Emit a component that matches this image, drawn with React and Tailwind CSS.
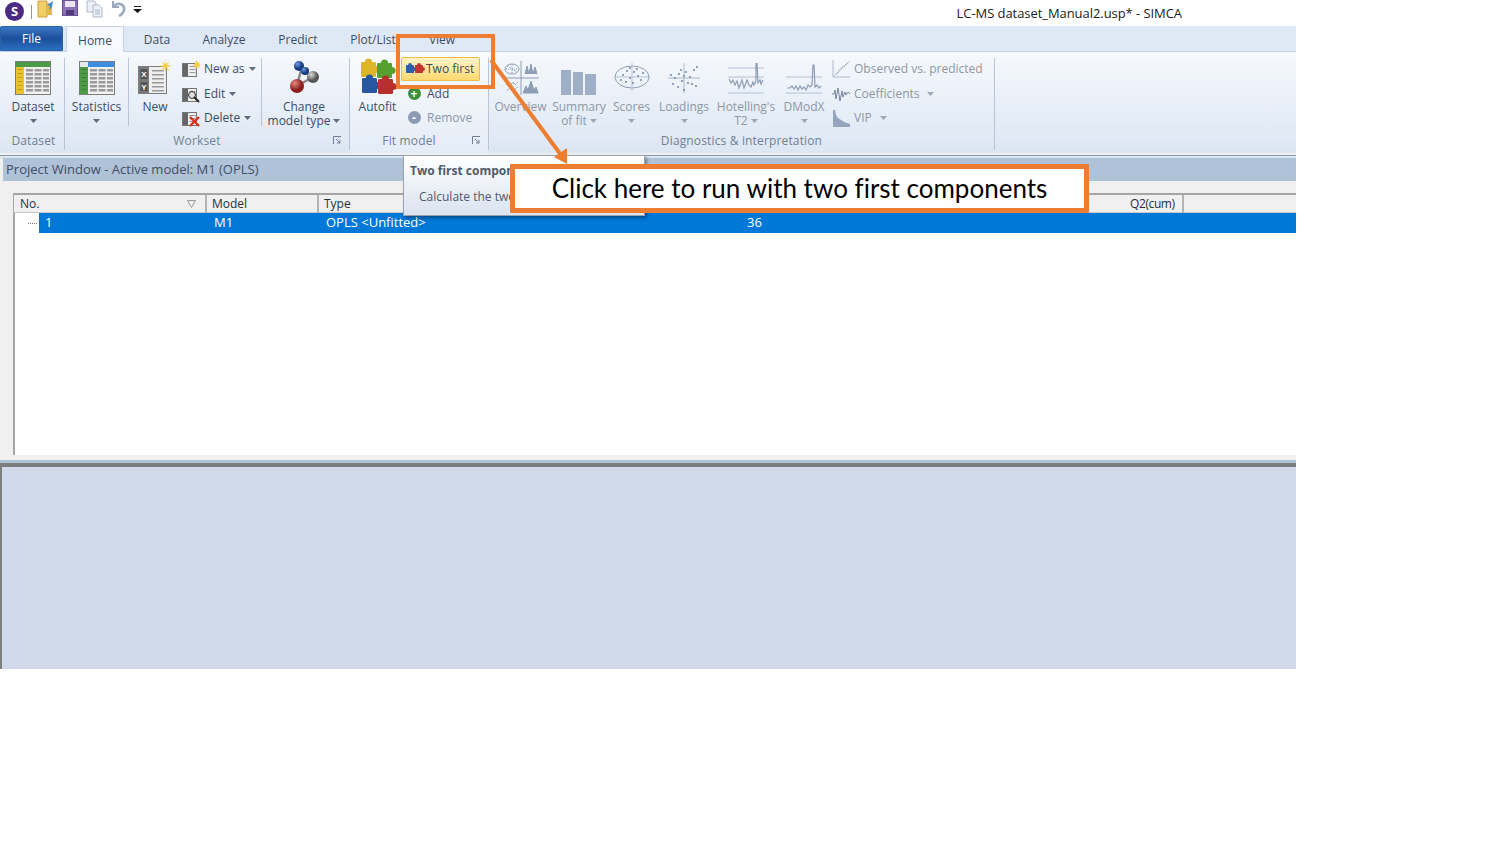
import React from "react";

const Caret = ({ className = "" }) => (
  <svg width="7" height="4" viewBox="0 0 7 4" className={className}>
    <path d="M0 0h7L3.5 4z" fill="currentColor" />
  </svg>
);

// table icon used by Dataset and Statistics
function TableIcon({ side, top, corner }) {
  const rows = [8, 12, 16, 20, 24, 28];
  return (
    <svg width="36" height="34" viewBox="0 0 36 34">
      <rect x="0.5" y="0.5" width="35" height="33" fill="#f2f2f2" stroke="#7d7d7d" />
      <rect x="1" y="1" width="34" height="5" fill={top} />
      <rect x="1" y="1" width="8" height="32" fill={side} />
      {corner && <rect x="1" y="1" width="8" height="5" fill={corner} />}
      {rows.map((y) => (
        <g key={y}>
          <rect x="11" y={y} width="7" height="2.5" fill="#9a9a9a" />
          <rect x="19.5" y={y} width="7" height="2.5" fill="#9a9a9a" />
          <rect x="28" y={y} width="6" height="2.5" fill="#9a9a9a" />
          <rect x="2.5" y={y} width="5" height="1" fill="#00000033" />
        </g>
      ))}
    </svg>
  );
}

function NewIcon() {
  return (
    <svg width="34" height="36" viewBox="0 0 34 36">
      <rect x="0.5" y="7.5" width="28" height="27" fill="#eee" stroke="#7d7d7d" />
      <rect x="1" y="8" width="10" height="26" fill="#7a7a7a" />
      <rect x="2.5" y="10" width="7" height="10" fill="#555" />
      <rect x="2.5" y="23" width="7" height="9" fill="#555" />
      <text x="6" y="18" fontSize="8" fontWeight="700" fill="#fff" textAnchor="middle" fontFamily="Liberation Sans">X</text>
      <text x="6" y="31" fontSize="8" fontWeight="700" fill="#fff" textAnchor="middle" fontFamily="Liberation Sans">Y</text>
      {[11, 15, 19, 23, 27, 31].map((y) => (
        <rect key={y} x="14" y={y} width="12" height="1.5" fill="#9a9a9a" />
      ))}
      <path d="M27 0v5l-4-3 3 4-5 1 5 1-3 4 4-3v5l1-5 4 3-3-4 5-1-5-1 3-4-4 3z" fill="#f6cf3e" />
    </svg>
  );
}

function SmallXY({ children }) {
  return (
    <svg width="18" height="18" viewBox="0 0 18 18">
      <rect x="0.5" y="3.5" width="14" height="13" fill="#eee" stroke="#777" />
      <rect x="1" y="4" width="5" height="12" fill="#666" />
      {[6, 9, 12].map((y) => (
        <rect key={y} x="7.5" y={y} width="6" height="1" fill="#999" />
      ))}
      {children}
    </svg>
  );
}

function Molecule() {
  return (
    <svg width="34" height="34" viewBox="0 0 34 34">
      <defs>
        <radialGradient id="mb" cx="35%" cy="30%"><stop offset="0" stopColor="#6f9be0" /><stop offset="1" stopColor="#12377f" /></radialGradient>
        <radialGradient id="mg" cx="35%" cy="30%"><stop offset="0" stopColor="#ddd" /><stop offset="1" stopColor="#555" /></radialGradient>
        <radialGradient id="mr" cx="35%" cy="30%"><stop offset="0" stopColor="#e58a80" /><stop offset="1" stopColor="#8d1c1c" /></radialGradient>
      </defs>
      <path d="M13 8L26 16M10 25L14 9M10 25L26 16" stroke="#8a8a8a" strokeWidth="2.5" />
      <circle cx="12" cy="5" r="5" fill="url(#mb)" />
      <circle cx="18" cy="10" r="4" fill="url(#mb)" />
      <circle cx="26" cy="16" r="6" fill="url(#mg)" />
      <circle cx="10" cy="25" r="7" fill="url(#mr)" />
    </svg>
  );
}

const PuzzlePiece = ({ x, y, s, fill }) => (
  <g fill={fill}>
    <rect x={x} y={y} width={s} height={s} rx={s * 0.08} />
    <circle cx={x + s / 2} cy={y} r={s * 0.24} />
    <circle cx={x + s} cy={y + s / 2} r={s * 0.24} />
  </g>
);

function Autofit() {
  return (
    <svg width="38" height="38" viewBox="0 0 38 38">
      <PuzzlePiece x={2} y={5} s={15} fill="#dcb52a" />
      <PuzzlePiece x={18} y={6} s={15} fill="#55a02e" />
      <PuzzlePiece x={3} y={21} s={15} fill="#27579f" />
      <PuzzlePiece x={19} y={22} s={15} fill="#b8302c" />
    </svg>
  );
}

function TwoFirstIcon() {
  return (
    <svg width="20" height="14" viewBox="0 0 20 14">
      <PuzzlePiece x={1} y={3} s={8} fill="#2f5da8" />
      <PuzzlePiece x={10} y={3} s={8} fill="#c2352f" />
    </svg>
  );
}

const RoundIcon = ({ bg, sign }) => (
  <span className={`w-[13px] h-[13px] rounded-full flex items-center justify-center text-white text-[12px] leading-none font-bold ${bg}`}>
    {sign}
  </span>
);

const DIM = "#8d9db5";

function Overview() {
  return (
    <svg width="36" height="34" viewBox="0 0 36 34" fill="none" stroke={DIM} strokeWidth="1">
      <path d="M18 0v34M0 17h36" />
      <ellipse cx="9" cy="8" rx="7" ry="5" />
      <path d="M4 5l10 6M9 3v10M3 8h12" strokeDasharray="1 1" />
      <path d="M22 13l2-8 2 8 2-10 2 10 2-7 2 7" fill={DIM} />
      <path d="M3 24l2-2 2 3 3-4 2 3 3-3M4 29l4-2 3 2 4-3" strokeDasharray="2 1" />
      <path d="M20 32l3-7 2 4 3-9 3 9 2-3 2 6z" fill={DIM} />
    </svg>
  );
}

function Summary() {
  return (
    <svg width="36" height="26" viewBox="0 0 36 26" fill="#9fafc6">
      <rect x="0" y="1" width="10" height="25" />
      <rect x="12" y="3" width="10" height="23" />
      <rect x="24" y="5" width="11" height="21" />
    </svg>
  );
}

function Scores() {
  const dots = [[9, 16], [13, 12], [16, 19], [20, 13], [24, 17], [27, 21], [12, 23], [19, 24], [23, 10], [29, 14], [7, 21], [16, 9]];
  return (
    <svg width="36" height="36" viewBox="0 0 36 36" fill="none">
      <ellipse cx="18" cy="18" rx="17" ry="11" stroke={DIM} />
      <path d="M18 4v28M0 18h36" stroke="#b7c3d6" />
      {dots.map(([x, y]) => <circle key={`${x}-${y}`} cx={x} cy={y} r="1" fill="#76879f" />)}
    </svg>
  );
}

function Loadings() {
  const dots = [[8, 17], [12, 13], [15, 20], [19, 11], [23, 16], [27, 9], [30, 6], [6, 23], [11, 26], [17, 29], [25, 23], [29, 25], [14, 9], [21, 22], [4, 14], [17, 15]];
  return (
    <svg width="34" height="34" viewBox="0 0 34 34" fill="none">
      <path d="M17 2v30M1 17h32" stroke="#a9b7cb" />
      {dots.map(([x, y]) => <circle key={`${x}-${y}`} cx={x} cy={y} r="1.1" fill="#7c8da5" />)}
    </svg>
  );
}

function HotellingIcon() {
  return (
    <svg width="36" height="32" viewBox="0 0 36 32" fill="none" stroke={DIM}>
      <path d="M0 5h36M0 14h36M0 30h36" stroke="#b4c1d4" />
      <path d="M1 16l2 4 2-3 2 5 2-4 2 7 3-8 2 8 3-8 2 5 2 2 2-5 1 3 2-4 0-18 1 0 1 20 2-3 1 4 2-4" strokeWidth="1.2" />
    </svg>
  );
}

function DModXIcon() {
  return (
    <svg width="36" height="32" viewBox="0 0 36 32" fill="none" stroke={DIM}>
      <path d="M0 14h36M0 30h36" stroke="#b4c1d4" />
      <path d="M1 25h3l2-2 2 3 2-3 2 4 2-4 2 3 2-2 2 3 2-5 2 2 2-2 1-20 1 0 1 22 2-2 2 3 2-2" strokeWidth="1.2" />
    </svg>
  );
}

function Observed() {
  return (
    <svg width="18" height="18" viewBox="0 0 18 18" fill="none">
      <path d="M1 0v17h17" stroke="#a9b7cb" />
      <path d="M2 16L18 1" stroke="#b8c4d6" />
      <path d="M4 14l2-1 1-3 2-1 1-2 3-1 1-2 2-1" stroke="#8496ae" strokeDasharray="1 1" />
    </svg>
  );
}

function Coefficients() {
  return (
    <svg width="18" height="18" viewBox="0 0 18 18" fill="none" stroke="#74859d">
      <path d="M0 9h2l1-4 1 9 2-11 2 13 2-10 1 6 2-5 1 3 2-3 2 2" />
    </svg>
  );
}

function Vip() {
  return (
    <svg width="18" height="18" viewBox="0 0 18 18" fill="#93a4bc">
      <path d="M1 1h2l1 5 2 3 3 2 3 2 3 1 3 1v3H1z" />
    </svg>
  );
}

function BigButton({ w, icon, label, label2, caret, caretInline, dim }) {
  return (
    <div className={`flex flex-col items-center ${w} ${dim ? "text-[#8d97a6]" : "text-[#3c4c63]"}`}>
      <div className="h-[48px] pb-[5px] flex items-end justify-center">{icon}</div>
      <div className="leading-[14px] whitespace-nowrap">{label}</div>
      {label2 && (
        <div className="leading-[14px] whitespace-nowrap flex items-center gap-[3px]">
          {label2}
          {caretInline && <Caret className="opacity-80" />}
        </div>
      )}
      {caret && <Caret className="mt-[5px] opacity-80" />}
    </div>
  );
}

function SmallButton({ icon, label, caret, dim, caretGap = "" }) {
  return (
    <div className={`h-[24.4px] flex items-center whitespace-nowrap gap-[4px] ${dim ? "text-[#8d97a6]" : "text-[#3c4c63]"}`}>
      <span className="w-[18px] flex justify-center">{icon}</span>
      <span>{label}</span>
      {caret && <Caret className={`${caretGap} opacity-80`} />}
    </div>
  );
}

const Launcher = ({ className }) => (
  <svg width="8" height="8" viewBox="0 0 8 8" className={className} fill="none" stroke="#6e7f96">
    <path d="M0.5 8V0.5H8M3 3l4 4M7 4v3H4" />
  </svg>
);

const GroupSep = () => <div className="w-[1px] h-[92px] mt-[6px] bg-[#b8c5d6] shrink-0" />;
const InnerSep = () => <div className="w-[1px] h-[68px] mt-[6px] bg-[#b8c5d6] shrink-0" />;

function GroupLabel({ children, launcher, pad }) {
  return (
    <div className={`relative h-[15px] leading-[15px] text-center text-[#6f7f95] tracking-[0.15px] ${pad ? "pr-[20px]" : ""}`}>
      {children}
      {launcher && <Launcher className="absolute right-[8px] top-[3px]" />}
    </div>
  );
}

function Tabs() {
  const tabs = [["Data", "w-[66px]"], ["Analyze", "w-[68px]"], ["Predict", "w-[80px]"], ["Plot/List", "w-[70px]"], ["View", "w-[68px]"]];
  return (
    <div className="h-[26px] bg-[#dfe9f5] flex items-end border-b border-[#c5d2e3] text-[12px] text-[#3c4c63]">
      <div className="w-[63px] h-[25px] pt-[1px] rounded-t-[2px] border border-[#2a62a8] bg-gradient-to-b from-[#3c78c4] via-[#1b4f9a] to-[#2a6fc0] text-white font-medium flex items-center justify-center">File</div>
      <div className="w-[58px] h-[26px] ml-[3px] -mb-[1px] pt-[2px] bg-[#f6f9fd] border border-b-0 border-[#c5d2e3] rounded-t-[2px] flex items-center justify-center">Home</div>
      {tabs.map(([name, w]) => (
        <div key={name} className={`${w} h-[25px] pt-[3px] flex items-center justify-center`}>{name}</div>
      ))}
    </div>
  );
}

function Ribbon() {
  return (
    <div className="h-[101px] bg-gradient-to-b from-[#f6f9fd] to-[#dce6f3] flex text-[12px] pl-[3px]">
      {/* Dataset */}
      <div className="w-[61px] flex flex-col">
        <div className="h-[81px]">
          <BigButton w="w-[60px]" icon={<TableIcon side="#e8c32a" top="#4d9b45" corner="#4d9b45" />} label="Dataset" caret />
        </div>
        <GroupLabel>Dataset</GroupLabel>
      </div>
      <GroupSep />
      {/* Workset */}
      <div className="w-[284px] flex flex-col">
        <div className="h-[81px] flex">
          <BigButton w="w-[63px]" icon={<TableIcon side="#4d9b45" top="#3d8ee0" corner="#e8e8e8" />} label="Statistics" caret />
          <InnerSep />
          <BigButton w="w-[52px]" icon={<NewIcon />} label="New" />
          <div className="w-[80px] pt-[5px] pl-[1px]">
            <SmallButton
              label="New as"
              caret
              icon={<SmallXY><path d="M14 0v3l-2-1 1 2-2 1 2 1-1 2 2-1 1 2 1-2 2 1-1-2 2-1-2-1 1-2-2 1-1-2z" fill="#f6cf3e" /></SmallXY>}
            />
            <SmallButton
              label="Edit"
              caret
              icon={<SmallXY><circle cx="10" cy="10" r="3.5" fill="#ddd" stroke="#333" /><path d="M12 12l5 5" stroke="#222" strokeWidth="2" /></SmallXY>}
            />
            <SmallButton
              label="Delete"
              caret
              icon={<SmallXY><path d="M8 8l9 9M17 8l-9 9" stroke="#d8321f" strokeWidth="2.4" /></SmallXY>}
            />
          </div>
          <InnerSep />
          <BigButton w="w-[84px]" icon={<Molecule />} label="Change" label2="model type" caretInline />
        </div>
        <GroupLabel launcher pad>Workset</GroupLabel>
      </div>
      <GroupSep />
      {/* Fit model */}
      <div className="w-[138px] flex flex-col bg-gradient-to-b from-[#fafcfe] to-[#e4ecf6]">
        <div className="h-[81px] flex">
          <BigButton w="w-[55px]" icon={<Autofit />} label="Autofit" />
          <div className="pt-[5px] w-[83px]">
            <div className="h-[24.4px] w-[79px] -ml-[4px] pl-[3px] flex items-center gap-[1px] rounded-[2px] border border-[#f0b94c] bg-gradient-to-b from-[#fff4c8] to-[#ffd86e] text-[#3c4c63] whitespace-nowrap">
              <TwoFirstIcon />
              <span>Two first</span>
            </div>
            <SmallButton label="Add" icon={<RoundIcon bg="bg-[#3f8f3a]" sign="+" />} />
            <SmallButton label="Remove" dim icon={<RoundIcon bg="bg-[#8a9bb3]" sign="-" />} />
          </div>
        </div>
        <GroupLabel launcher pad>Fit model</GroupLabel>
      </div>
      <GroupSep />
      {/* Diagnostics */}
      <div className="w-[505px] flex flex-col">
        <div className="h-[81px] flex">
          <BigButton w="w-[63px]" dim icon={<Overview />} label="Overview" />
          <BigButton w="w-[54px]" dim icon={<Summary />} label="Summary" label2="of fit" caretInline />
          <BigButton w="w-[51px]" dim icon={<Scores />} label="Scores" caret />
          <BigButton w="w-[54px]" dim icon={<Loadings />} label="Loadings" caret />
          <BigButton w="w-[70px]" dim icon={<HotellingIcon />} label="Hotelling's" label2="T2" caretInline />
          <BigButton w="w-[46px]" dim icon={<DModXIcon />} label="DModX" caret />
          <div className="pl-[5px] pt-[5px]">
            <SmallButton dim label="Observed vs. predicted" icon={<Observed />} />
            <SmallButton dim label="Coefficients" caret caretGap="ml-[4px]" icon={<Coefficients />} />
            <SmallButton dim label="VIP" caret caretGap="ml-[4px]" icon={<Vip />} />
          </div>
        </div>
        <GroupLabel>Diagnostics &amp; interpretation</GroupLabel>
      </div>
      <GroupSep />
    </div>
  );
}

function ProjectWindow() {
  return (
    <div className="h-[307px] bg-[#f0f0f0] flex flex-col">
      <div className="h-[4px] bg-[#dce6f3] border-t border-[#8c9bb0] mt-[2px]" />
      <div className="h-[23px] -mt-[1px] ml-[3px] pt-[1px] bg-[#b0c2d8] flex items-center pl-[3px] text-[13px] text-[#3f4f66]">
        Project Window - Active model: M1 (OPLS)
      </div>
      <div className="h-[12px]" />
      <div className="flex-1 ml-[13px] border-l-2 border-[#a5a5a5] flex flex-col bg-white">
        <div className="h-[20px] border-t-2 border-[#a5a5a5] border-b border-b-[#c8c8c8] bg-[#f0f0f0] flex items-center text-[12px] text-[#26303d] -ml-[1px]">
          <div className="w-[193px] pl-[6px] flex items-center justify-between pr-[9px] border-r-2 border-[#b4b4b4]">
            <span>No.</span>
            <svg width="9" height="8" viewBox="0 0 9 8" fill="none" stroke="#9a9a9a"><path d="M0.5 0.5h8L4.5 7.5z" /></svg>
          </div>
          <div className="w-[112px] pl-[5px] border-r-2 border-[#b4b4b4]">Model</div>
          <div className="w-[32px] pl-[5px]">Type</div>
          <div className="ml-[779px] w-[54px] border-r-2 border-[#b4b4b4] tracking-[-0.4px]">Q2(cum)</div>
        </div>
        <div className="h-[20px] flex items-center text-[13px] text-white">
          <div className="w-[24px] flex justify-end pr-[2px]">
            <div className="w-[9px] border-t border-dotted border-[#777]" />
          </div>
          <div className="flex-1 h-full bg-[#0078d7] flex items-center">
            <div className="w-[175px] pl-[6px]">1</div>
            <div className="w-[112px]">M1</div>
            <div className="w-[421px]">OPLS &lt;Unfitted&gt;</div>
            <div>36</div>
          </div>
        </div>
      </div>
      <div className="h-[5px] bg-[#f0f0f0]" />
    </div>
  );
}

function Overlays() {
  return (
    <>
      {/* hover tooltip, its right part is hidden by the callout */}
      <div className="absolute left-[403px] top-[155px] w-[242px] h-[61px] bg-gradient-to-b from-white to-[#dbe3ef] border border-[#9aa3af] shadow-[2px_2px_3px_rgba(0,0,0,0.35)] text-[12px] text-[#4c5a6e]">
        <div className="ml-[6px] mt-[6px] font-bold whitespace-nowrap">Two first components</div>
        <div className="ml-[15px] mt-[8px] whitespace-nowrap">Calculate the two first components</div>
      </div>
      {/* orange highlight */}
      <div className="absolute left-[396px] top-[34px] w-[99px] h-[55px] border-[4px] border-[#ed7d31]" />
      <svg className="absolute left-[485px] top-[55px]" width="95" height="115" viewBox="0 0 95 115" fill="none">
        <path d="M6 5L76 100" stroke="#ed7d31" strokeWidth="4" />
        <path d="M82 109L69 102L82 93z" fill="#ed7d31" />
      </svg>
      {/* callout */}
      <div className="absolute left-[510px] top-[164px] w-[579px] h-[49px] border-[5px] border-[#ed7d31] rounded-[1px] bg-white flex items-center justify-center font-['Lato',sans-serif] text-[26px] text-black whitespace-nowrap [font-variant-ligatures:none]">
        Click here to run with two first components
      </div>
    </>
  );
}

export default function App() {
  return (
    <div className="w-[1500px] h-[844px] bg-white font-['Open_Sans',sans-serif] overflow-hidden">
      <div className="relative w-[1296px]">
        {/* Title bar */}
        <div className="h-[26px] bg-white flex items-start relative">
          <div className="ml-[5px] mt-[2px] w-[19px] h-[19px] rounded-full bg-[#4b2a84] text-white text-[13px] font-bold leading-[19px] text-center">S</div>
          <div className="ml-[7px] mt-[5px] w-[1px] h-[14px] bg-[#999]" />
          <svg className="ml-[5px]" width="17" height="18" viewBox="0 0 17 18">
            <path d="M1 1h9v16H1z" fill="#f2cf66" stroke="#c9a13a" />
            <path d="M10 3h5v12h-5z" fill="#e2b944" />
            <path d="M16 1l-6 4 3 1-1 4 3-3z" fill="#3d8ed8" />
          </svg>
          <svg className="ml-[8px]" width="17" height="16" viewBox="0 0 17 16">
            <rect x="0.5" y="0.5" width="15" height="15" fill="#8b6fb8" stroke="#6b4f99" />
            <rect x="3" y="1" width="10" height="6" fill="#e8e4f1" />
            <rect x="4" y="10" width="8" height="5" fill="#4e3b78" />
          </svg>
          <svg className="ml-[7px]" width="18" height="18" viewBox="0 0 18 18" fill="#eef2f8" stroke="#a9b8cc">
            <path d="M1 1h7l2 2v9H1z" />
            <path d="M7 5h6l3 3v9H7z" />
            <path d="M9 10h5M9 12h5M9 14h5" />
          </svg>
          <svg className="ml-[7px]" width="16" height="17" viewBox="0 0 16 17" fill="none">
            <path d="M2 1v6h6" stroke="#9aa9be" strokeWidth="2" />
            <path d="M3 6c4-4 11-2 10 4-0.5 3-3 5-5 6" stroke="#9aa9be" strokeWidth="2.5" />
          </svg>
          <svg className="ml-[6px] mt-[6px]" width="9" height="7" viewBox="0 0 9 7">
            <path d="M1 0h7v1H1zM0 3h9L4.5 7z" fill="#111" />
          </svg>
          <div className="ml-auto mr-[114px] mt-[4px] text-[13px] leading-[18px] text-[#1b1b1b] tracking-[-0.06px] whitespace-nowrap">LC-MS dataset_Manual2.usp* - SIMCA</div>
        </div>
        <Tabs />
        <Ribbon />
        <ProjectWindow />
        {/* Lower pane */}
        <div className="h-[7px] bg-[#b0c2d8] border-b-[4px] border-[#7d7d7d]" />
        <div className="h-[202px] bg-[#d0daea] border-l-2 border-[#7d7d7d]" />
        <Overlays />
      </div>
    </div>
  );
}
